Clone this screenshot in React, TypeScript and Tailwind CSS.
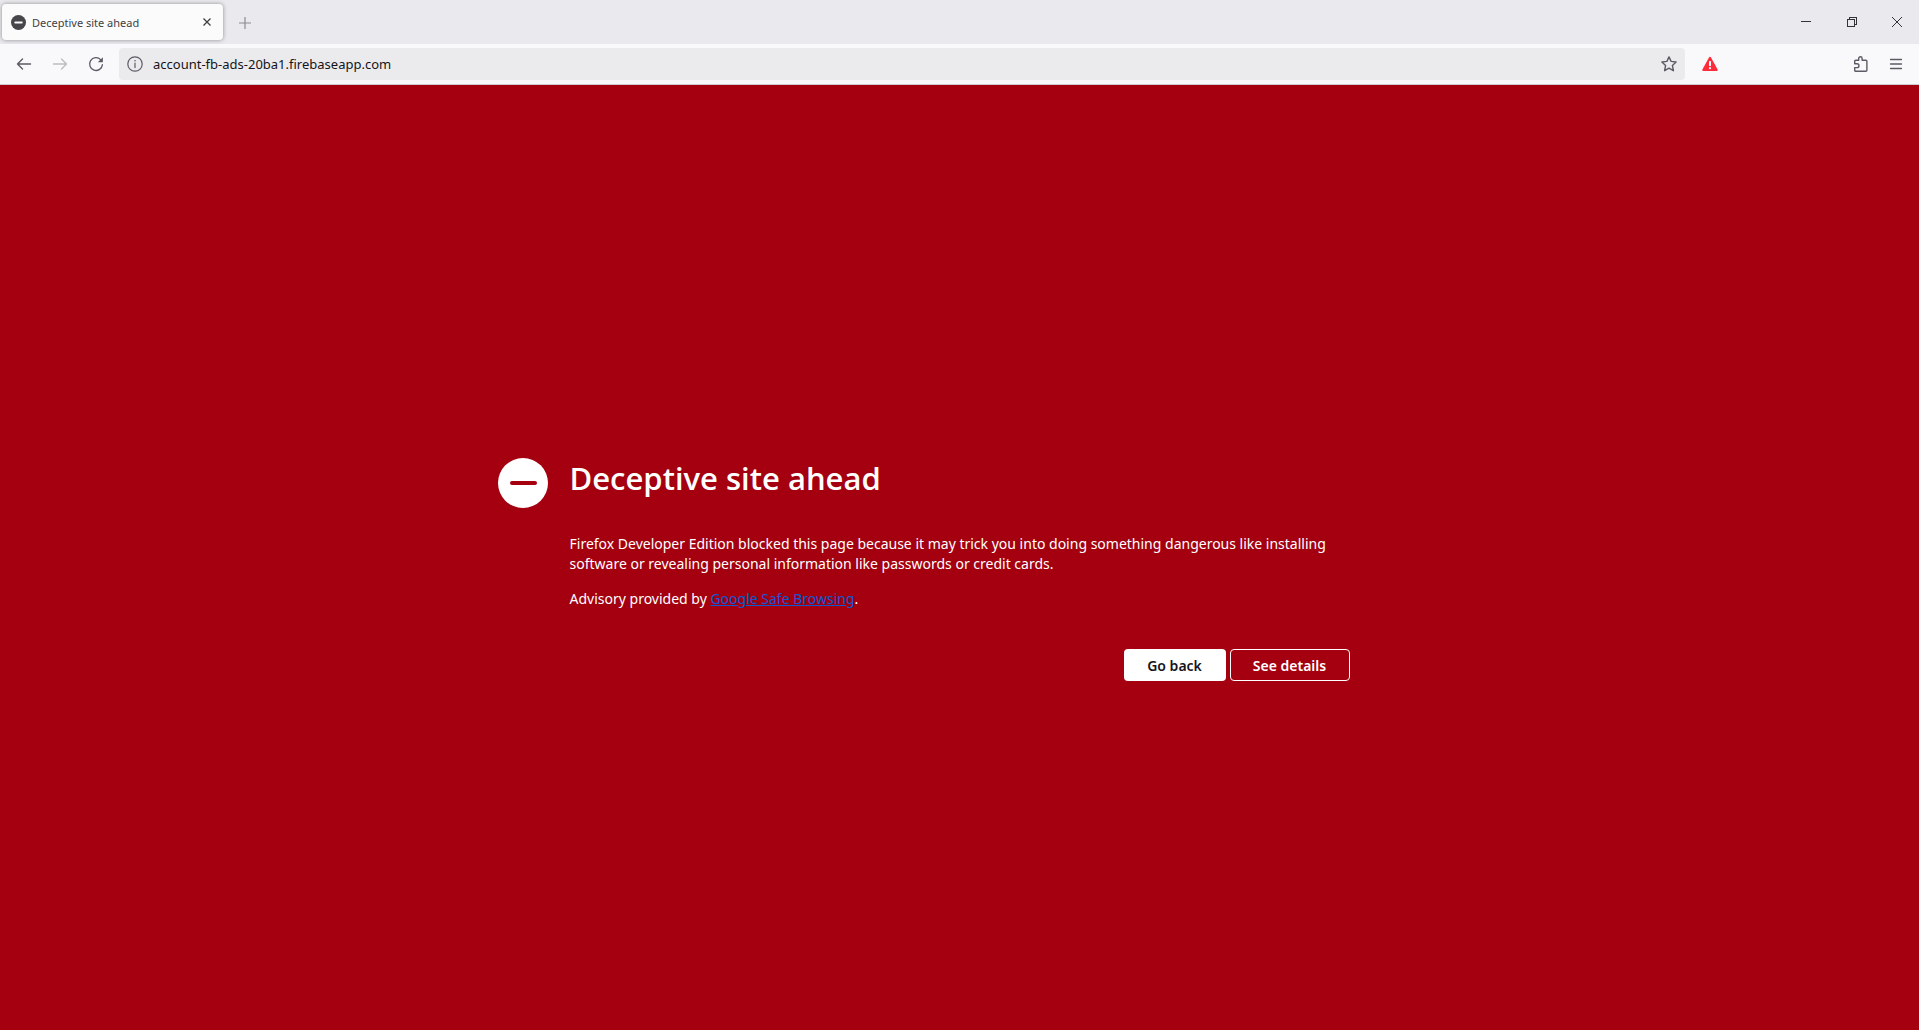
import type { ReactNode } from "react";

function ToolbarButton({ label, children }: { label: string; children: ReactNode }) {
  return (
    <button type="button" aria-label={label} className="flex size-8 shrink-0 items-center justify-center rounded text-[#5b5b66]">
      {children}
    </button>
  );
}

function WindowButton({ label, children }: { label: string; children: ReactNode }) {
  return (
    <button type="button" aria-label={label} className="flex h-9 w-[46px] items-center justify-center text-[#333338] last:w-11">
      <svg width="10" height="10" viewBox="0 0 10 10" fill="none" stroke="currentColor" shapeRendering="crispEdges" aria-hidden="true">
        {children}
      </svg>
    </button>
  );
}

function TabStrip() {
  return (
    <div className="flex h-11 items-start bg-[#eae9ed]">
      <div className="mt-1 ml-0.5 flex h-9 w-[221px] items-center rounded bg-[#fbfbfb] pr-2 pl-[9px] shadow-[0_0_4px_rgba(0,0,0,0.4)]">
        <svg width="15" height="15" viewBox="0 0 16 16" className="shrink-0" aria-hidden="true">
          <circle cx="8" cy="8" r="8" fill="#46464b" />
          <rect x="3.5" y="7" width="9" height="2" rx="1" fill="#fbfbfb" />
        </svg>
        <span className="ml-[6px] flex-1 pt-0.5 text-[11px] whitespace-nowrap text-[#3f3f44]">Deceptive site ahead</span>
        <button type="button" aria-label="Close tab" className="flex size-4 items-center justify-center text-[#3f3f44]">
          <svg width="8" height="8" viewBox="0 0 8 8" stroke="currentColor" strokeWidth="1.3" aria-hidden="true">
            <path d="M0.5 0.5l7 7M7.5 0.5l-7 7" />
          </svg>
        </button>
      </div>
      <button type="button" aria-label="Open a new tab" className="mt-[7px] ml-[6px] flex size-8 items-center justify-center text-[#8b8b90]">
        <svg width="12" height="12" viewBox="0 0 12 12" stroke="currentColor" strokeWidth="1.2" aria-hidden="true">
          <path d="M6 0v12M0 6h12" />
        </svg>
      </button>
      <div className="ml-auto flex pt-1">
        <WindowButton label="Minimize">
          <path d="M0 4.5h10" />
        </WindowButton>
        <WindowButton label="Restore">
          <path d="M0.5 2.5h7v7h-7zM2.5 2.5v-2h7v7h-2" />
        </WindowButton>
        <WindowButton label="Close">
          <path d="M0 0l10 10M10 0L0 10" shapeRendering="auto" />
        </WindowButton>
      </div>
    </div>
  );
}

function NavBar() {
  return (
    <div className="flex h-[41px] items-center border-b border-[#cccccf] bg-[#f9f9fb] pr-[7px] pl-2">
      <div className="flex gap-1">
        <ToolbarButton label="Back">
          <svg width="16" height="16" viewBox="0 0 16 16" fill="none" stroke="currentColor" strokeWidth="1.4" strokeLinecap="round" strokeLinejoin="round" aria-hidden="true">
            <path d="M14.5 8h-13M6.5 3l-5 5 5 5" />
          </svg>
        </ToolbarButton>
        <ToolbarButton label="Forward">
          <svg width="16" height="16" viewBox="0 0 16 16" fill="none" stroke="#bdbdc2" strokeWidth="1.4" strokeLinecap="round" strokeLinejoin="round" aria-hidden="true">
            <path d="M1.5 8h13M9.5 3l5 5-5 5" />
          </svg>
        </ToolbarButton>
        <ToolbarButton label="Reload">
          <svg width="16" height="16" viewBox="0 0 16 16" fill="none" stroke="currentColor" strokeWidth="1.3" strokeLinecap="round" aria-hidden="true">
            <path d="M12.6 3.6A6.4 6.4 0 1 0 14.4 8.6" />
            <path d="M14.9 1.2v4.6a.5.5 0 0 1-.5.5H9.8z" fill="currentColor" stroke="none" />
          </svg>
        </ToolbarButton>
      </div>
      <div className="ml-[7px] flex h-8 flex-1 items-center rounded bg-[#ebebed] pl-2">
        <button type="button" aria-label="Site information" className="flex shrink-0 text-[#5b5b66]">
          <svg width="16" height="16" viewBox="0 0 16 16" fill="none" stroke="currentColor" strokeWidth="1.2" aria-hidden="true">
            <circle cx="8" cy="8" r="7.2" />
            <path d="M8 7v4.6" strokeLinecap="round" />
            <circle cx="8" cy="4.7" r="0.8" fill="currentColor" stroke="none" />
          </svg>
        </button>
        <input
          type="text"
          aria-label="Address"
          defaultValue="account-fb-ads-20ba1.firebaseapp.com"
          className="ml-[10px] min-w-0 flex-1 bg-transparent pt-0.5 text-[13px] text-[#15141a] outline-none"
        />
        <ToolbarButton label="Bookmark this page">
          <svg width="16" height="16" viewBox="0 0 16 16" fill="none" stroke="currentColor" strokeWidth="1.4" strokeLinejoin="round" aria-hidden="true">
            <path d="M8 .9l2.1 4.5 5 .6-3.7 3.5 1 5.2L8 12.2l-4.4 2.5 1-5.2L.9 6l5-.6z" />
          </svg>
        </ToolbarButton>
      </div>
      <div className="ml-[9px]">
        <ToolbarButton label="Deceptive site warning">
          <svg width="16" height="16" viewBox="0 0 16 16" aria-hidden="true">
            <path d="M8 .8c.5 0 .8.2 1 .6l6.6 12c.4.8-.1 1.6-1 1.6H1.4c-.9 0-1.4-.8-1-1.6L7 1.4c.2-.4.5-.6 1-.6z" fill="#ff2a3a" />
            <rect x="7" y="5" width="2" height="5" rx=".6" fill="#f9f9fb" />
            <circle cx="8" cy="12.2" r="1.1" fill="#f9f9fb" />
          </svg>
        </ToolbarButton>
      </div>
      <div className="ml-[119px] flex gap-[3px]">
        <ToolbarButton label="Extensions">
          <svg width="16" height="16" viewBox="0 0 16 16" fill="none" stroke="currentColor" strokeWidth="1.4" strokeLinejoin="round" aria-hidden="true">
            <path d="M1.7 7.7V5.3a1 1 0 0 1 1-1h3V2.5a1.7 1.7 0 0 1 3.4 0v1.8h3.8a1 1 0 0 1 1 1v9a1 1 0 0 1-1 1H2.7a1 1 0 0 1-1-1v-2.7h2.3a1.9 1.9 0 0 0 0-3.9z" />
          </svg>
        </ToolbarButton>
        <ToolbarButton label="Open application menu">
          <svg width="16" height="16" viewBox="0 0 16 16" fill="none" stroke="currentColor" strokeWidth="1.3" strokeLinecap="round" aria-hidden="true">
            <path d="M2.5 3.5h11M2.5 8h11M2.5 12.5h11" />
          </svg>
        </ToolbarButton>
      </div>
    </div>
  );
}

function Warning() {
  return (
    <main className="flex flex-1 items-center justify-center bg-[#a4000f] px-12 pt-6 text-white">
      <div className="flex w-full max-w-[924px] items-start gap-[22px] pr-[72px]">
        <svg width="50" height="50" viewBox="0 0 50 50" className="shrink-0" aria-hidden="true">
          <circle cx="25" cy="25" r="25" fill="#ffffff" />
          <rect x="12" y="23" width="27" height="4" rx="2" fill="#a4000f" />
        </svg>
        <div className="flex-1">
          <h1 className="font-['Open_Sans','Noto_Sans',sans-serif] text-[31px] leading-10 font-semibold">Deceptive site ahead</h1>
          <p className="mt-9 text-[14px] leading-5">
            Firefox Developer Edition blocked this page because it may trick you into doing something dangerous like installing
            software or revealing personal information like passwords or credit cards.
          </p>
          <p className="mt-[15px] text-[14px] leading-5">
            Advisory provided by{" "}
            <a href="#safe-browsing" className="text-[#0a5ad6] underline">
              Google Safe Browsing
            </a>
            .
          </p>
          <div className="mt-10 flex justify-end gap-1 text-[14px] font-semibold">
            <button type="button" className="h-8 w-[102px] rounded bg-white text-[#15141a]">
              Go back
            </button>
            <button type="button" className="h-8 w-[120px] rounded border border-white">
              See details
            </button>
          </div>
        </div>
      </div>
    </main>
  );
}

export default function App() {
  return (
    <div className="flex min-h-screen flex-col font-['Noto_Sans','Open_Sans',sans-serif]">
      <TabStrip />
      <NavBar />
      <Warning />
    </div>
  );
}
